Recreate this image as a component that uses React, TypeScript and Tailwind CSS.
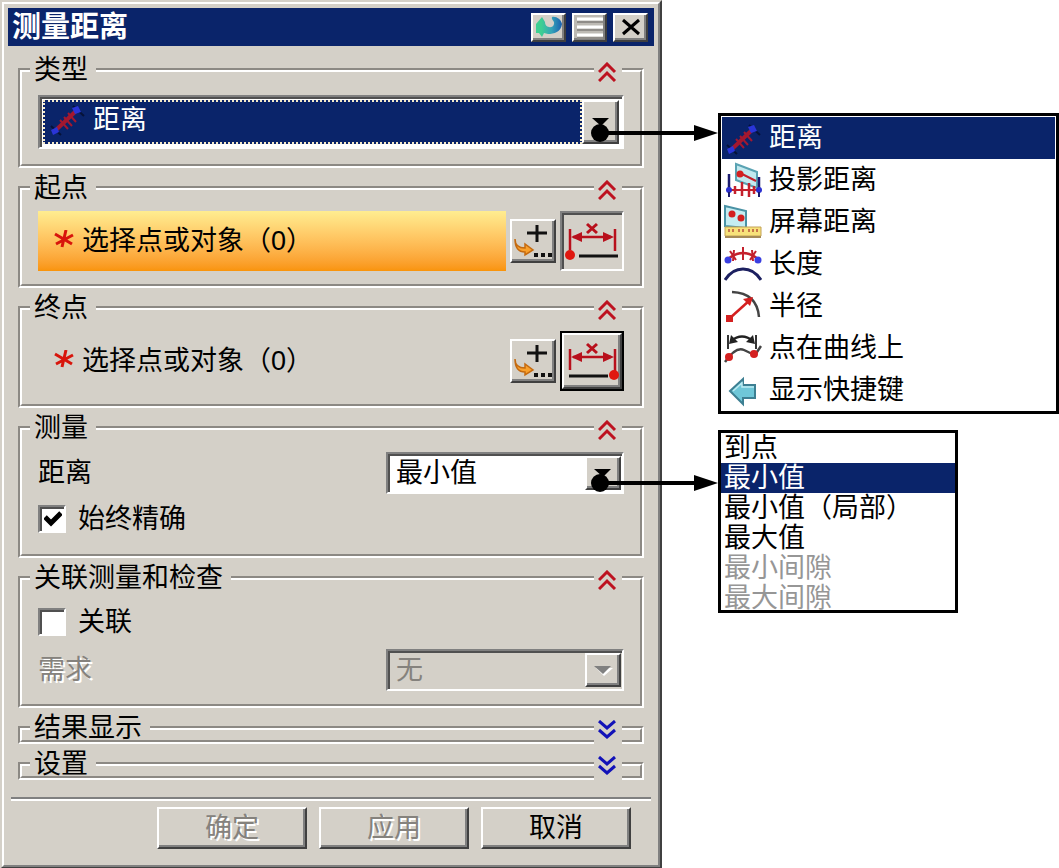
import React, { useId, useState } from 'react';
import clsx from 'clsx';

const RAISED =
  'border-2 border-t-white border-l-white border-b-[#404040] border-r-[#404040] shadow-[inset_-2px_-2px_0_#808080]';
const SUNKEN =
  'border-2 border-t-[#808080] border-l-[#808080] border-b-white border-r-white shadow-[inset_2px_2px_0_#505050]';
const DISABLED_TEXT = 'text-[#85827d] [text-shadow:2px_2px_0_#fff]';

/* ---------- icons ---------- */

function DistanceIcon() {
  return (
    <svg width="38" height="36" viewBox="0 0 38 36" fill="none" aria-hidden="true">
      <path d="M25 5l11 10M3 25l10 9" stroke="#061238" strokeWidth="2" />
      <path d="M8 29L28 10" stroke="#a3182f" strokeWidth="4" />
      <path d="M12 19l8 9M16 16l8 9M20 12l8 9" stroke="#a3182f" strokeWidth="2" />
      <path d="M24 7l6-2 3 6-6 2zM3 29l6-3 2 5-6 3z" fill="#2a35d8" />
    </svg>
  );
}

function ProjectedIcon() {
  return (
    <svg width="38" height="36" viewBox="0 0 38 36" fill="none" aria-hidden="true">
      <path d="M12 2l21 8v16l-21-8z" fill="#c2e9ef" stroke="#5aa3b3" strokeWidth="2" />
      <path d="M16 11l16 8" stroke="#c4202c" strokeWidth="2" />
      <circle cx="16" cy="12" r="3.5" fill="#d42020" />
      <path d="M5 12v14M35 15v11" stroke="#1b1b6e" strokeWidth="2.5" />
      <path d="M6 28h28" stroke="#c4202c" strokeWidth="2" />
      <path d="M11 24v8M18 20v14M25 21v14M30 24v8" stroke="#c4202c" strokeWidth="2.5" />
      <circle cx="5" cy="28" r="3" fill="#2a2fd0" />
      <circle cx="35" cy="28" r="3" fill="#2a2fd0" />
      <path d="M5 30v5M35 30v5" stroke="#1b1b6e" strokeWidth="2" />
    </svg>
  );
}

function ScreenIcon() {
  return (
    <svg width="38" height="36" viewBox="0 0 38 36" fill="none" aria-hidden="true">
      <path d="M1 2l21 5v17L1 22z" fill="#c5edf2" stroke="#4a92a5" strokeWidth="2" />
      <circle cx="8" cy="10" r="3.5" fill="#d42020" />
      <circle cx="17" cy="14" r="3.5" fill="#d42020" />
      <path d="M1 23h36v9H1z" fill="#f8e27a" stroke="#c3a256" strokeWidth="1" />
      <path d="M5 25v3M9 25v3M15 25v3M19 25v3M25 25v3M29 25v3M33 25v3" stroke="#b5533c" strokeWidth="1.5" />
      <path d="M1 33h36" stroke="#a58a57" strokeWidth="2" />
    </svg>
  );
}

function LengthIcon() {
  return (
    <svg width="38" height="36" viewBox="0 0 38 36" fill="none" aria-hidden="true">
      <path d="M4 13Q19 1 34 13" stroke="#c4202c" strokeWidth="2.5" />
      <path d="M19 1v13M6 5l6 9M32 5l-6 9M10 4l-1 11M28 4l1 11" stroke="#c4202c" strokeWidth="2" />
      <circle cx="4" cy="14" r="3.5" fill="#3a3fe0" />
      <circle cx="34" cy="14" r="3.5" fill="#3a3fe0" />
      <path d="M1 34Q8 23 19 23T37 34" stroke="#1c2060" strokeWidth="3" />
    </svg>
  );
}

function RadiusIcon() {
  return (
    <svg width="38" height="36" viewBox="0 0 38 36" fill="none" aria-hidden="true">
      <path d="M8 4Q33 5 35 29" stroke="#444" strokeWidth="2.5" />
      <path d="M6 30L26 12" stroke="#d42020" strokeWidth="2.5" />
      <path d="M29 9l-3 9-7-7z" fill="#d42020" />
      <path d="M2 27h7v7H2z" fill="#d42020" />
    </svg>
  );
}

function PointOnCurveIcon() {
  return (
    <svg width="38" height="36" viewBox="0 0 38 36" fill="none" aria-hidden="true">
      <path d="M4 5v14M32 5v14" stroke="#333" strokeWidth="2" />
      <path d="M7 11Q18 2 29 11" stroke="#222" strokeWidth="2.5" />
      <path d="M5 14l2-9 7 7zM31 14l-2-9-7 7z" fill="#222" />
      <path d="M1 32Q12 16 20 20T31 25L37 16" stroke="#444" strokeWidth="2.5" />
      <circle cx="5" cy="27" r="4" fill="#d42020" />
      <circle cx="30" cy="24" r="4" fill="#d42020" />
    </svg>
  );
}

function ShortcutIcon() {
  return (
    <svg width="38" height="36" viewBox="0 0 38 36" fill="none" aria-hidden="true">
      <path d="M6 19L19 7v6h12v13H19v6z" fill="#6fc7d8" stroke="#3d7f92" strokeWidth="2" />
      <path d="M9 19l9-8v4h12" stroke="#bdebf2" strokeWidth="1.5" />
    </svg>
  );
}

function RequiredIcon() {
  return (
    <svg width="22" height="22" viewBox="0 0 22 22" fill="none" aria-hidden="true">
      <path d="M13 0L9 17M2 4l17 10M3 14L20 5" stroke="#d8150c" strokeWidth="3" />
    </svg>
  );
}

function PointDialogIcon() {
  return (
    <svg width="42" height="38" viewBox="0 0 42 38" fill="none" aria-hidden="true">
      <path d="M25 4v17M15 12h20" stroke="#111" strokeWidth="3" />
      <path d="M3 18c0 6 4 9 10 9v-4l8 6-8 5v-3C7 31 3 27 3 18z" fill="#f9a02c" stroke="#c46a10" strokeWidth="1.5" />
      <path d="M22 34h4M29 34h4M36 34h4" stroke="#111" strokeWidth="4" />
    </svg>
  );
}

function MeasureIcon({ end }: { end?: boolean }) {
  return (
    <svg width="54" height="48" viewBox="0 0 54 48" fill="none" aria-hidden="true">
      <path d="M5 12v21M50 12v22" stroke="#b8101c" strokeWidth="2.5" />
      <path d="M8 20h38" stroke="#b8101c" strokeWidth="2.5" />
      <path d="M6 20l11-5v10zM49 20l-11-5v10z" fill="#b8101c" />
      <path d="M22 7l10 9M32 7l-10 9" stroke="#b8101c" strokeWidth="3" />
      {end ? (
        <>
          <path d="M4 39h39" stroke="#111" strokeWidth="3" />
          <circle cx="49" cy="38" r="5" fill="#e01810" />
        </>
      ) : (
        <>
          <path d="M14 39h39" stroke="#111" strokeWidth="3" />
          <circle cx="5" cy="38" r="5" fill="#e01810" />
        </>
      )}
    </svg>
  );
}

function ResetIcon() {
  return (
    <svg width="30" height="24" viewBox="0 0 30 24" fill="none" aria-hidden="true">
      <defs>
        <linearGradient id="resetFill" x1="0" x2="1">
          <stop offset="0.2" stopColor="#3dcf92" />
          <stop offset="0.6" stopColor="#35a3b8" />
          <stop offset="1" stopColor="#1a5fae" />
        </linearGradient>
      </defs>
      <path
        d="M2 9L8 2l3 5c0 6 8 7 9 2 1-3-3-4-2-7 4-1 9 2 10 7-1 8-8 10-14 10l-4-1-2 4-3-4H2z"
        fill="url(#resetFill)"
      />
    </svg>
  );
}

/* Leader line that runs from a drop-down button to its open list */
function Leader({ className }: { className: string }) {
  return (
    <svg
      width="128"
      height="20"
      viewBox="0 0 128 20"
      aria-hidden="true"
      className={clsx('absolute left-full z-10 -ml-8 pointer-events-none max-w-none', className)}
    >
      <circle cx="10" cy="10" r="9" />
      <path d="M10 8h98v4H10zM104 2l24 8-24 8z" />
    </svg>
  );
}

/* ---------- controls ---------- */

function DropArrow({ disabled, className }: { disabled?: boolean; className?: string }) {
  return (
    <span aria-hidden="true" className={clsx('flex shrink-0 items-center justify-center bg-[#d4d0c8]', RAISED, className)}>
      <svg width="20" height="11" viewBox="0 0 20 11">
        {disabled && <path d="M3 3h17l-9 8z" fill="#fff" />}
        <path d="M1 1h17l-8 8z" fill={disabled ? '#808080' : '#000'} />
      </svg>
    </span>
  );
}

interface GroupProps {
  title: string;
  collapsed?: boolean;
  className?: string;
  children?: React.ReactNode;
}

function Group({ title, collapsed, className, children }: GroupProps) {
  return (
    <section className="border-2 border-t-[#8c8984] border-l-[#8c8984] border-b-white border-r-white">
      <div
        className={clsx(
          'border-2 border-t-white border-l-white border-b-[#8c8984] border-r-[#8c8984]',
          collapsed && 'h-[14px]'
        )}
      >
        <div className="-mt-4 flex h-7 items-start justify-between pl-2 pr-[18px]">
          {/* shorter than its line so a collapsed frame keeps its bottom edge */}
          <h2 className="h-6 bg-[#d4d0c8] pl-1 pr-2 leading-[28px]">{title}</h2>
          <button
            type="button"
            aria-label={title}
            aria-expanded={!collapsed}
            className="flex h-8 w-7 shrink-0 items-center justify-center bg-[#d4d0c8]"
          >
            <svg width="20" height="20" viewBox="0 0 20 20" fill="none" strokeWidth="3">
              {collapsed ? (
                <path d="M1 1l8 7 8-7M1 10l8 7 8-7" stroke="#1212b8" />
              ) : (
                <path d="M1 10l8-8 8 8M1 19l8-8 8 8" stroke="#bd1220" />
              )}
            </svg>
          </button>
        </div>
        {!collapsed && <div className={className}>{children}</div>}
      </div>
    </section>
  );
}

function PointRow({ active }: { active?: boolean }) {
  return (
    <div className="flex items-center">
      <div
        className={clsx(
          'flex h-[60px] flex-1 items-center gap-[7px] pl-[15px]',
          active && 'bg-linear-to-b from-[#ffed90] to-[#f99408]'
        )}
      >
        <RequiredIcon />
        <span>选择点或对象（0）</span>
      </div>
      <button type="button" aria-label="点" className={clsx('ml-1 flex h-[44px] w-[46px] shrink-0', RAISED)}>
        <PointDialogIcon />
      </button>
      <div className={clsx('ml-1 shrink-0', !active && 'border-2 border-black')}>
        <button
          type="button"
          aria-label={active ? '起点' : '终点'}
          className={clsx('flex items-center justify-center', active ? 'h-[60px] w-16' : 'h-14 w-[60px]', active ? SUNKEN : RAISED)}
        >
          <MeasureIcon end={!active} />
        </button>
      </div>
    </div>
  );
}

interface CheckProps {
  label: string;
  checked: boolean;
  onChange: (checked: boolean) => void;
}

function Check({ label, checked, onChange }: CheckProps) {
  return (
    <label className="flex items-center gap-3">
      <span className="relative flex">
        <input
          type="checkbox"
          checked={checked}
          onChange={(e) => onChange(e.target.checked)}
          className={clsx('h-7 w-7 appearance-none bg-white', SUNKEN)}
        />
        {checked && (
          <svg width="18" height="16" viewBox="0 0 18 16" fill="none" className="pointer-events-none absolute left-[6px] top-[6px]">
            <path d="M1 6l6 6L17 2" stroke="#000" strokeWidth="5" />
          </svg>
        )}
      </span>
      {label}
    </label>
  );
}

/* ---------- data ---------- */

const TYPES = [
  { name: '距离', icon: <DistanceIcon /> },
  { name: '投影距离', icon: <ProjectedIcon /> },
  { name: '屏幕距离', icon: <ScreenIcon /> },
  { name: '长度', icon: <LengthIcon /> },
  { name: '半径', icon: <RadiusIcon /> },
  { name: '点在曲线上', icon: <PointOnCurveIcon /> },
  { name: '显示快捷键', icon: <ShortcutIcon /> }
];

const DISTANCES = [
  { name: '到点' },
  { name: '最小值' },
  { name: '最小值（局部）' },
  { name: '最大值' },
  { name: '最小间隙', disabled: true },
  { name: '最大间隙', disabled: true }
];

export default function App() {
  const [type, setType] = useState('距离');
  const [distance, setDistance] = useState('最小值');
  const [exact, setExact] = useState(true);
  const [linked, setLinked] = useState(false);
  const distanceId = useId();
  const demandId = useId();

  return (
    <div className="flex items-start bg-white font-['Liberation_Sans','Noto_Sans_CJK_SC',sans-serif] text-[27px] leading-[28px] text-black">
      <main className="min-w-0 flex-1 border-2 border-t-[#d4d0c8] border-l-[#d4d0c8] border-b-[#404040] border-r-[#404040]">
        <div className="border-2 border-t-white border-l-white border-b-[#808080] border-r-[#808080] bg-[#d4d0c8] p-1">
          {/* Title bar */}
          <header className="flex h-[38px] items-center gap-[6px] bg-[#0a246a] pl-1 pr-[6px]">
            <h1 className="flex-1 text-[29px] font-bold text-white">测量距离</h1>
            <button type="button" aria-label="重置" className={clsx('flex h-[29px] w-[35px] justify-center bg-[#d4d0c8]', RAISED)}>
              <ResetIcon />
            </button>
            <button type="button" aria-label="折叠" className={clsx('flex h-[29px] w-[35px] justify-center bg-[#bdbab4]', RAISED)}>
              <svg width="30" height="24" viewBox="0 0 30 24" fill="none">
                <path d="M2 4h26M2 12h26M2 20h26" stroke="#fff" strokeWidth="3" />
                <path d="M2 7h26M2 15h26M2 23h26" stroke="#8f8c88" strokeWidth="2" />
              </svg>
            </button>
            <button type="button" aria-label="关闭" className={clsx('flex h-[29px] w-[35px] justify-center bg-[#d4d0c8]', RAISED)}>
              <svg width="30" height="24" viewBox="0 0 30 24" fill="none">
                <path d="M7 5l16 14M23 5L7 19" stroke="#000" strokeWidth="3" />
              </svg>
            </button>
          </header>

          <div className="flex flex-col gap-[18px] px-[10px] pt-[22px]">
            <Group title="类型" className="px-4 pt-[11px] pb-[15px]">
              <div className={clsx('relative flex h-[54px] bg-white p-[3px]', SUNKEN)}>
                <span className="pointer-events-none absolute left-2 top-1">
                  <DistanceIcon />
                </span>
                <select
                  aria-label="类型"
                  value={type}
                  onChange={(e) => setType(e.target.value)}
                  className="h-11 min-w-0 flex-1 appearance-none border-2 border-dotted border-[#f4e9c8] bg-[#0a246a] pb-1 pl-12 text-white"
                >
                  {TYPES.map((item) => (
                    <option key={item.name}>{item.name}</option>
                  ))}
                </select>
                <DropArrow className="w-[37px]" />
                <Leader className="top-[26px]" />
              </div>
            </Group>

            <Group title="起点" className="px-4 pt-[9px] pb-[13px]">
              <PointRow active />
            </Group>

            <Group title="终点" className="px-4 pt-[9px] pb-[13px]">
              <PointRow />
            </Group>

            <Group title="测量" className="px-4 pt-[10px] pb-[21px]">
              <div className="flex items-center justify-between">
                <label htmlFor={distanceId}>距离</label>
                <div className={clsx('relative flex h-[42px] w-[238px] bg-white py-[2px] pl-[2px] pr-px', SUNKEN)}>
                  <select
                    id={distanceId}
                    value={distance}
                    onChange={(e) => setDistance(e.target.value)}
                    className="min-w-0 flex-1 appearance-none pl-[6px] leading-[28px]"
                  >
                    {DISTANCES.map((item) => (
                      <option key={item.name} disabled={item.disabled}>
                        {item.name}
                      </option>
                    ))}
                  </select>
                  <DropArrow className="w-9" />
                  <Leader className="top-[19px]" />
                </div>
              </div>
              <div className="pt-[11px]">
                <Check label="始终精确" checked={exact} onChange={setExact} />
              </div>
            </Group>

            <Group title="关联测量和检查" className="px-4 pt-[16px] pb-[13px]">
              <Check label="关联" checked={linked} onChange={setLinked} />
              <div className="flex items-center justify-between pt-[13px]">
                <label htmlFor={demandId} className={DISABLED_TEXT}>
                  需求
                </label>
                <div className={clsx('flex h-[42px] w-[238px] py-[2px] pl-[2px] pr-px', SUNKEN)}>
                  <select
                    id={demandId}
                    disabled
                    className="min-w-0 flex-1 appearance-none pl-[6px] leading-[28px] text-[#85827d] opacity-100"
                  >
                    <option>无</option>
                  </select>
                  <DropArrow disabled className="w-9" />
                </div>
              </div>
            </Group>

            <Group title="结果显示" collapsed />
            <Group title="设置" collapsed />
          </div>

          {/* Footer */}
          <footer className="mx-[3px] mt-[17px] border-t-2 border-[#808080]">
            <div className="flex justify-end gap-3 border-t-2 border-white pb-3 pr-5 pt-[6px]">
              <button type="button" disabled className={clsx('h-[42px] w-[150px]', RAISED, DISABLED_TEXT)}>
                确定
              </button>
              <button type="button" disabled className={clsx('h-[42px] w-[150px]', RAISED, DISABLED_TEXT)}>
                应用
              </button>
              <button type="button" className={clsx('h-[42px] w-[150px]', RAISED)}>
                取消
              </button>
            </div>
          </footer>
        </div>
      </main>

      {/* Open lists */}
      <aside className="ml-14 flex w-[341px] shrink-0 flex-col items-start gap-4 pt-[113px]">
        <ul role="listbox" aria-label="类型" className="w-full border-[3px] border-black p-px pb-0">
          {TYPES.map((item) => (
            <li
              key={item.name}
              role="option"
              aria-selected={item.name === type}
              onClick={() => setType(item.name)}
              className={clsx('flex h-[42px] items-center gap-[7px] pl-[2px]', item.name === type && 'bg-[#0a246a] text-white')}
            >
              {item.icon}
              <span>{item.name}</span>
            </li>
          ))}
        </ul>

        <ul role="listbox" aria-label="距离" className="h-[183px] w-60 overflow-hidden border-[3px] border-black">
          {DISTANCES.map((item) => (
            <li
              key={item.name}
              role="option"
              aria-selected={item.name === distance}
              aria-disabled={item.disabled}
              onClick={() => !item.disabled && setDistance(item.name)}
              className={clsx(
                'h-[30px] pl-[3px] leading-[30px]',
                item.name === distance && 'bg-[#0a246a] text-white',
                item.disabled && 'text-[#969696]'
              )}
            >
              {item.name}
            </li>
          ))}
        </ul>
      </aside>
    </div>
  );
}
